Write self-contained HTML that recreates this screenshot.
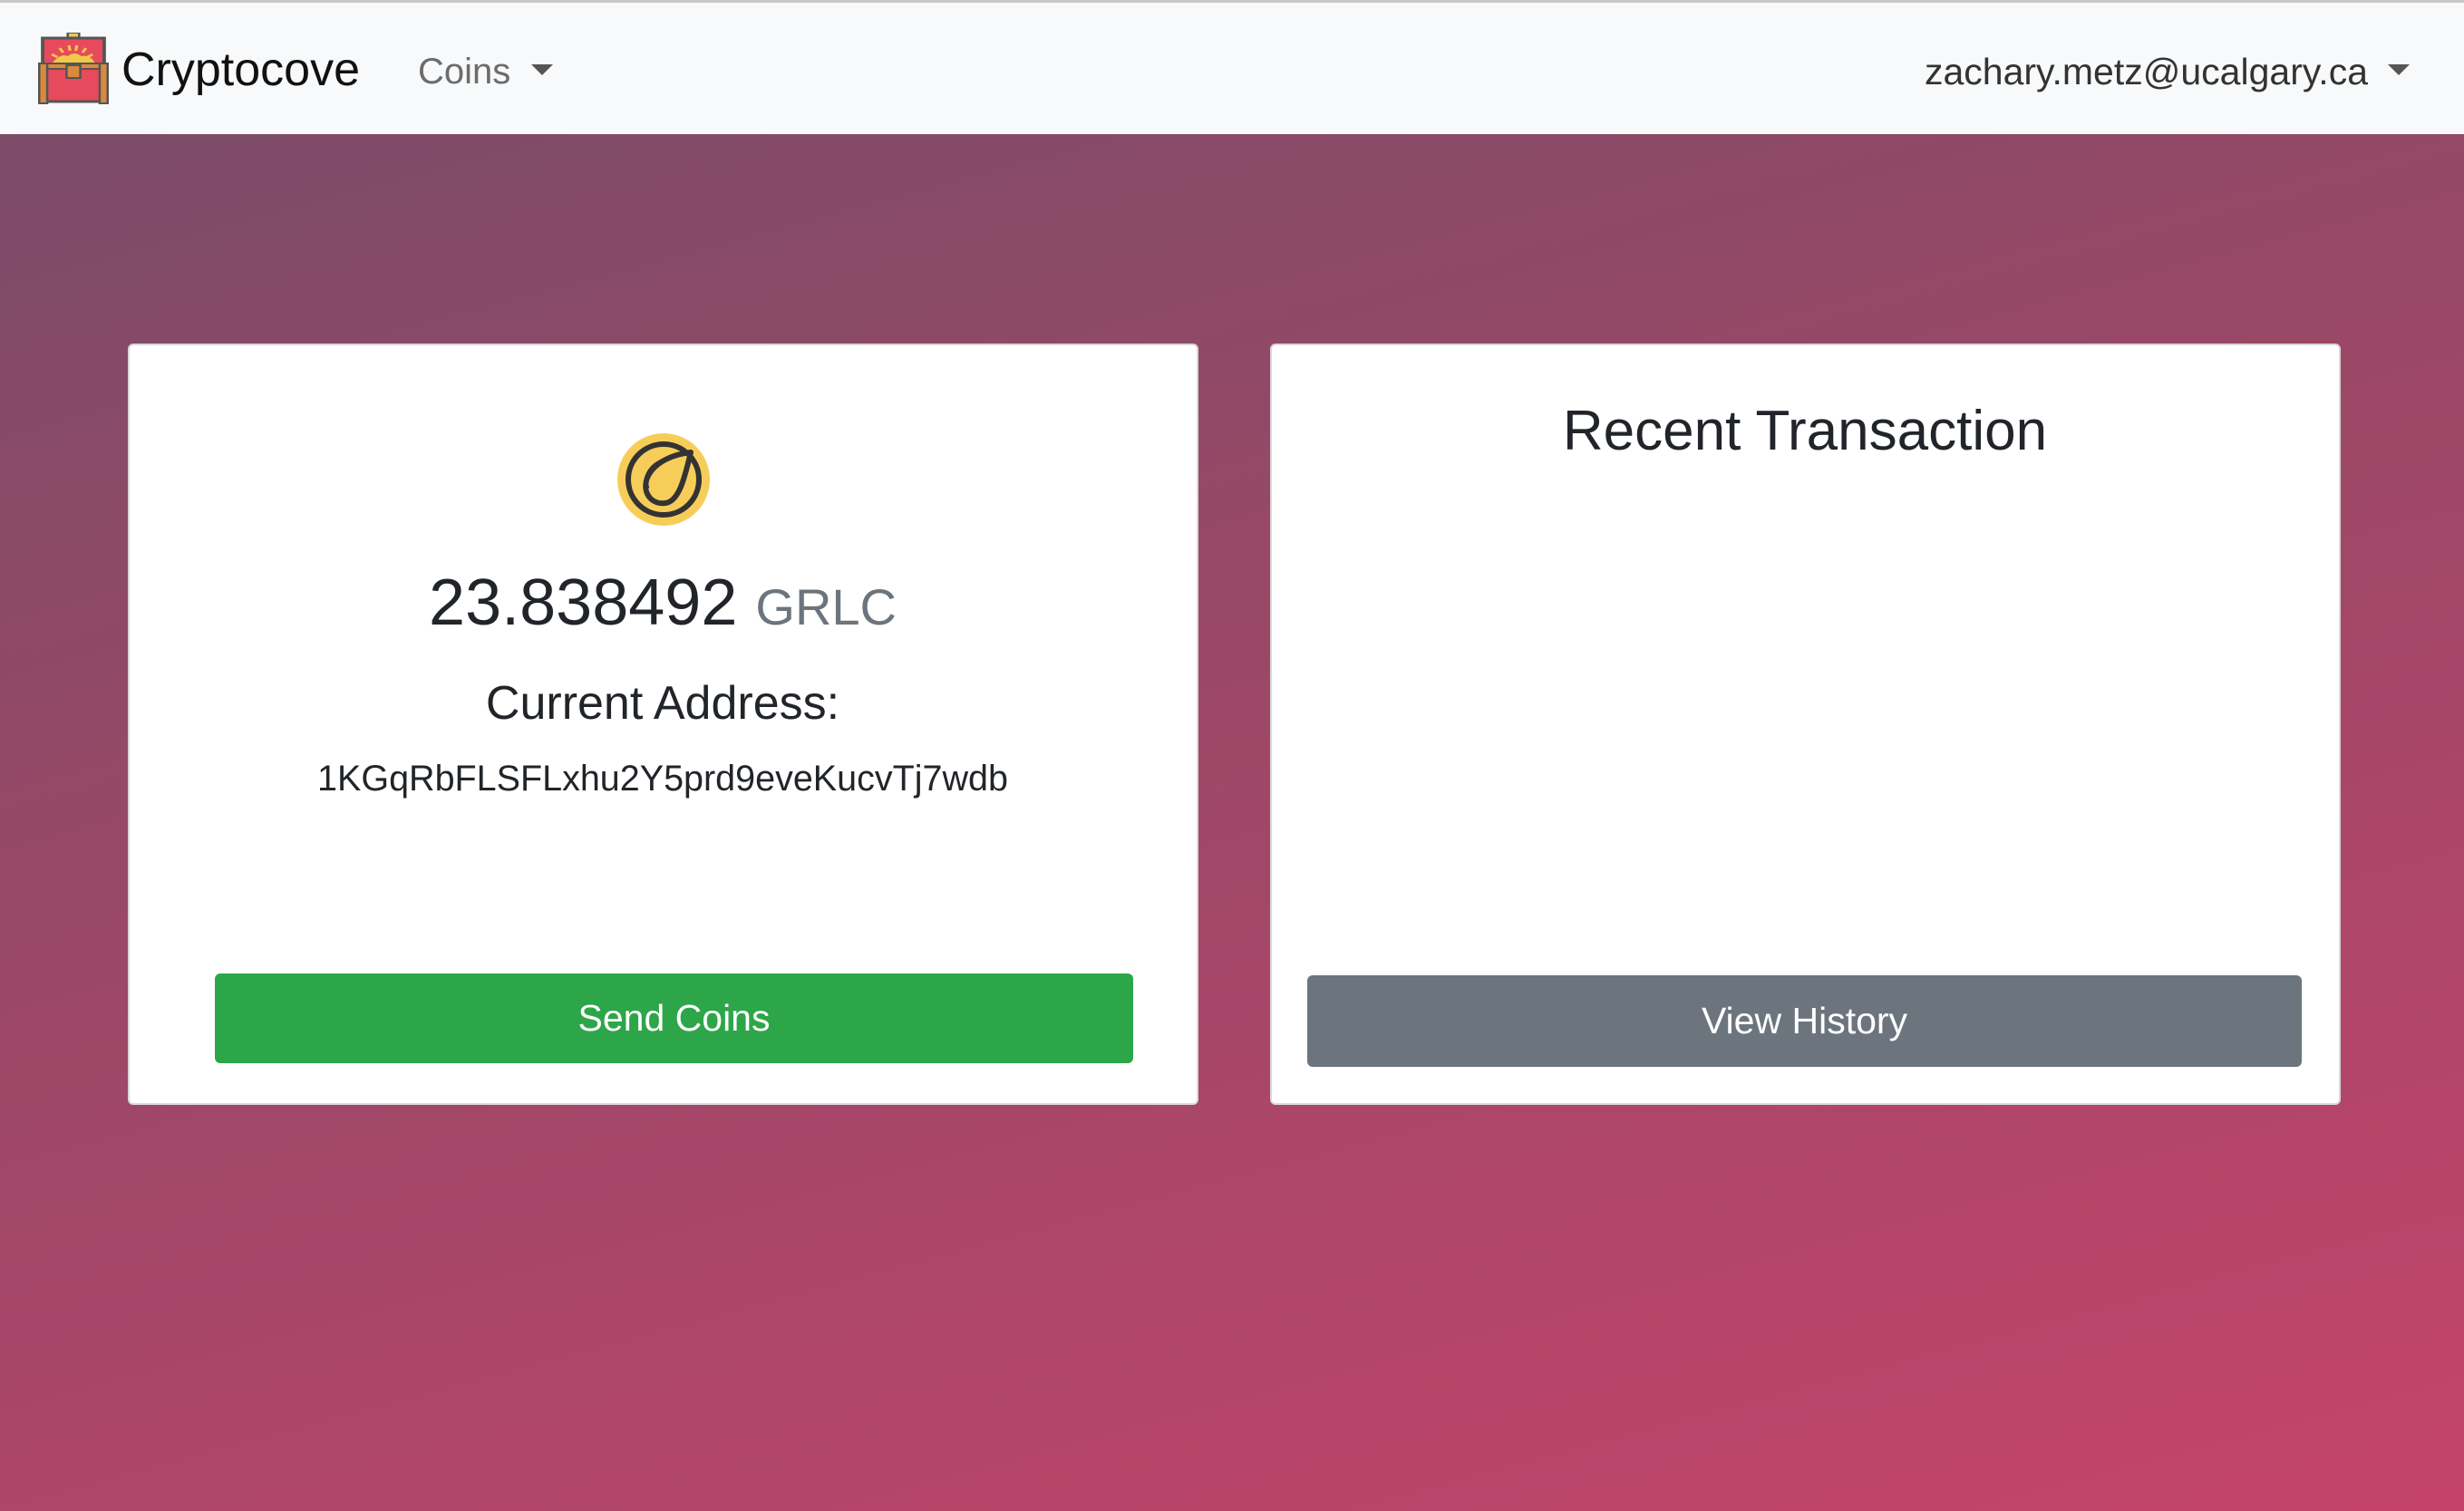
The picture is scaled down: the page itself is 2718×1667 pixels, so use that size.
<!DOCTYPE html>
<html><head><meta charset="utf-8"><style>
*{margin:0;padding:0;box-sizing:border-box}
body{width:2718px;height:1667px;overflow:hidden;font-family:"Liberation Sans",sans-serif;background:linear-gradient(165deg,#774c69 0%,#9a4866 45%,#c4436c 100%);position:relative;color:#212529}
.nav{position:absolute;left:0;top:0;width:2718px;height:148px;background:#f8f9fa;border-top:3px solid #c8c8c8}
.abs{position:absolute;white-space:nowrap}
.card{position:absolute;background:#fff;border:2px solid rgba(0,0,0,.15);border-radius:6px}
.tri{position:absolute;width:0;height:0;border-left:12px solid transparent;border-right:12px solid transparent;border-top:12px solid #555}
.c{text-align:center;transform:translateX(-50%)}
.btn{position:absolute;border-radius:6px;color:#fff;font-size:41px;display:flex;align-items:center;justify-content:center}
</style></head><body>
<div class="nav">
<svg class="abs" style="left:42px;top:33px" width="78" height="80" viewBox="0 0 62 80" preserveAspectRatio="none">
<rect x="26" y="0" width="10" height="6" fill="#f0c94a" stroke="#555" stroke-width="2"/>
<rect x="4" y="6" width="54" height="70" fill="#e64a5c" stroke="#555" stroke-width="3"/>
<path d="M12 34 q8-12 14-8 q6-6 12 0 q8-2 12 8z" fill="#f0c94a"/>
<rect x="1" y="34" width="60" height="6" fill="#d98a3e" stroke="#555" stroke-width="2"/>
<rect x="1" y="34" width="7" height="44" fill="#d98a3e" stroke="#555" stroke-width="2"/>
<rect x="54" y="34" width="7" height="44" fill="#d98a3e" stroke="#555" stroke-width="2"/>
<rect x="25" y="36" width="12" height="14" fill="#d98a3e" stroke="#555" stroke-width="2"/>
<g stroke="#f0c94a" stroke-width="2.5"><line x1="27" y1="14" x2="28" y2="20"/><line x1="34" y1="14" x2="33" y2="20"/><line x1="19" y1="17" x2="22" y2="22"/><line x1="42" y1="17" x2="39" y2="22"/><line x1="12" y1="24" x2="17" y2="27"/><line x1="48" y1="24" x2="43" y2="27"/></g>
</svg>
<div class="abs" style="left:134px;top:44px;font-size:52px;color:#111">Cryptocove</div>
<div class="abs" style="left:461px;top:54px;font-size:40px;color:#6c6c6c">Coins</div>
<div class="tri" style="left:586px;top:68px"></div>
<div class="abs" style="right:106px;top:53px;font-size:41px;color:#333">zachary.metz@ucalgary.ca</div>
<div class="tri" style="left:2634px;top:68px"></div>
</div>
<div class="card" style="left:141px;top:379px;width:1181px;height:840px"></div>
<div class="card" style="left:1401px;top:379px;width:1181px;height:840px"></div>
<svg class="abs" style="left:680px;top:477px" width="104" height="104" viewBox="0 0 104 104">
<circle cx="52" cy="52" r="51" fill="#f7cd5a"/>
<circle cx="52" cy="52" r="39" fill="none" stroke="#333" stroke-width="6"/>
<path d="M82 22 C64 24 42 32 34 50 C28 66 38 80 54 78 C70 76 76 46 82 22 Z" fill="none" stroke="#333" stroke-width="6" stroke-linejoin="round"/>
<path d="M50 32 C36 38 30 52 34 62" fill="none" stroke="#333" stroke-width="5"/>
</svg>
<div class="abs c" style="left:731px;top:624px;font-size:72px;color:#212529">23.838492 <span style="font-size:56px;color:#6c757d">GRLC</span></div>
<div class="abs c" style="left:731px;top:746px;font-size:52px;color:#212529">Current Address:</div>
<div class="abs c" style="left:731px;top:837px;font-size:39.5px;color:#212529">1KGqRbFLSFLxhu2Y5prd9eveKucvTj7wdb</div>
<div class="abs c" style="left:1991px;top:440px;font-size:62px;color:#212529">Recent Transaction</div>
<div class="btn" style="left:237px;top:1074px;width:1013px;height:99px;background:#2ca649">Send Coins</div>
<div class="btn" style="left:1442px;top:1076px;width:1097px;height:101px;background:#6c757d">View History</div>
</body></html>
